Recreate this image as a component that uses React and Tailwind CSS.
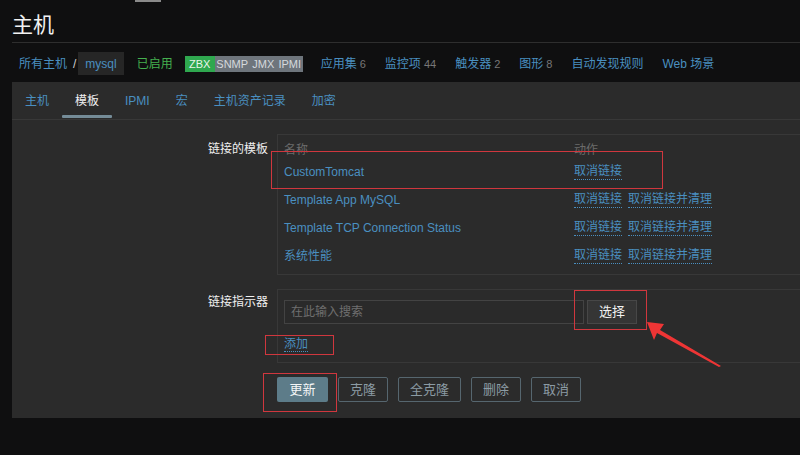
import React from 'react';

const hostLinks = [
    { label: '应用集', count: '6' },
    { label: '监控项', count: '44' },
    { label: '触发器', count: '2' },
    { label: '图形', count: '8' },
    { label: '自动发现规则' },
    { label: 'Web 场景' },
];

const tabs = ['主机', '模板', 'IPMI', '宏', '主机资产记录', '加密'];

const templates = [
    { name: 'CustomTomcat', clear: false },
    { name: 'Template App MySQL', clear: true },
    { name: 'Template TCP Connection Status', clear: true },
    { name: '系统性能', clear: true },
];

const DottedLink = ({ children }) => (
    <span className="text-[#4a8fc0] border-b border-dotted border-[#4a8fc0] leading-[15px]">{children}</span>
);

const App = () => {
    return (
        <div className="relative w-[800px] h-[455px] overflow-hidden bg-[#0f0f10] text-[12px] font-['Liberation_Sans','Noto_Sans_CJK_SC',sans-serif]">
            {/* little marker at the very top */}
            <div className="absolute left-[135px] top-0 w-[26px] h-[2px] bg-[#8a8a8a]" />

            <div className="pl-3">
                <h1 className="h-[43px] flex items-center pt-[8px] text-[21px] text-[#f2f2f2] border-b border-[#2e2e2e]">主机</h1>

                {/* breadcrumbs / host nav */}
                <div className="h-[39px] flex items-center pt-[2px]">
                    <span className="ml-[7px] text-[#4a8fc0]">所有主机</span>
                    <span className="ml-[6px] text-[#cfcfcf]">/</span>
                    <span className="ml-[2px] h-[23px] px-[7px] flex items-center bg-[#262626] text-[#4a8fc0]">mysql</span>
                    <span className="ml-[13px] text-[#45b04f]">已启用</span>
                    <span className="ml-[12px] flex items-center h-[16px] text-[11px] leading-[16px]">
                        <span className="w-[30px] text-center bg-[#2fa84f] text-[#e8f6ea]">ZBX</span>
                        <span className="flex bg-[#6e757c] text-[#d5d9dc]">
                            <span className="w-[35px] text-center">SNMP</span>
                            <span className="w-[27px] text-center">JMX</span>
                            <span className="w-[26px] text-center">IPMI</span>
                        </span>
                    </span>
                    {hostLinks.map((l, i) => (
                        <span key={i} className={i === 0 ? 'ml-[18px]' : 'ml-[19px]'}>
                            <span className="text-[#4a8fc0]">{l.label}</span>
                            {l.count && <span className="ml-[3px] text-[11px] text-[#777]">{l.count}</span>}
                        </span>
                    ))}
                </div>

                {/* main panel */}
                <div className="bg-[#2b2b2b] h-[336px]">
                    <div className="flex h-[38px] border-b border-[#383838] pt-[1px]">
                        {tabs.map((t, i) => (
                            <div
                                key={t}
                                className={`relative px-[13px] flex items-center ${i === 1 ? 'text-[#f0f0f0]' : 'text-[#4a8fc0]'}`}
                            >
                                {t}
                                {i === 1 && <div className="absolute left-0 right-0 bottom-[1px] h-[3px] bg-[#758c98] rounded-[1px]" />}
                            </div>
                        ))}
                    </div>

                    {/* linked templates */}
                    <div className="flex pt-[14px]">
                        <div className="w-[256px] text-right text-[#f0f0f0] pt-[6px]">链接的模板</div>
                        <div className="ml-[9px] flex-1 h-[141px] border border-r-0 border-[#383838] pl-[6px] pt-[6px]">
                            <div className="flex h-[17px] items-center text-[#6b6b6b]">
                                <span className="w-[290px]">名称</span>
                                <span>动作</span>
                            </div>
                            {templates.map((t) => (
                                <div key={t.name} className="flex h-[28px] items-center">
                                    <span className="w-[290px] text-[#4a8fc0]">{t.name}</span>
                                    <span className="flex gap-[6px]">
                                        <DottedLink>取消链接</DottedLink>
                                        {t.clear && <DottedLink>取消链接并清理</DottedLink>}
                                    </span>
                                </div>
                            ))}
                        </div>
                    </div>

                    {/* link new templates */}
                    <div className="flex pt-[14px]">
                        <div className="w-[256px] text-right text-[#f0f0f0] pt-[4px]">链接指示器</div>
                        <div className="ml-[9px] flex-1 h-[74px] border border-r-0 border-[#383838] pl-[6px] pt-[10px]">
                            <div className="flex gap-[3px]">
                                <div className="w-[300px] h-[24px] border border-[#434343] bg-[#2a2a2a] px-[6px] flex items-center text-[#6f6f6f]">在此输入搜索</div>
                                <div className="w-[50px] h-[24px] border border-[#474747] bg-[#353535] flex items-center justify-center text-[13px] text-[#f0f0f0]">选择</div>
                            </div>
                            <div className="mt-[11px]">
                                <DottedLink>添加</DottedLink>
                            </div>
                        </div>
                    </div>

                    {/* buttons */}
                    <div className="flex pt-[14px] pl-[265px] gap-[10px] text-[13px]">
                        <div className="w-[51px] h-[25px] rounded-[2px] bg-[#5d7c89] text-[#f4f6f7] flex items-center justify-center">更新</div>
                        <div className="w-[50px] h-[25px] rounded-[2px] border border-[#56666f] text-[#8b9ba4] flex items-center justify-center">克隆</div>
                        <div className="w-[63px] h-[25px] rounded-[2px] border border-[#56666f] text-[#8b9ba4] flex items-center justify-center">全克隆</div>
                        <div className="w-[50px] h-[25px] rounded-[2px] border border-[#56666f] text-[#8b9ba4] flex items-center justify-center">删除</div>
                        <div className="w-[50px] h-[25px] rounded-[2px] border border-[#56666f] text-[#8b9ba4] flex items-center justify-center">取消</div>
                    </div>
                </div>
            </div>

            {/* red annotations */}
            <div className="absolute left-[271px] top-[151px] w-[392px] h-[38px] border border-[#d0373e]" />
            <div className="absolute left-[574px] top-[290px] w-[73px] h-[40px] border border-[#d0373e]" />
            <div className="absolute left-[265px] top-[335px] w-[69px] h-[20px] border border-[#d0373e]" />
            <div className="absolute left-[263px] top-[373px] w-[74px] h-[39px] border border-[#d0373e]" />
            <svg className="absolute left-0 top-0" width="800" height="455" viewBox="0 0 800 455">
                <polygon points="647,322 664,324 660,330 721,366 719,367 657,333 654,340" fill="#ee3535" />
            </svg>
        </div>
    );
};

export default App;
